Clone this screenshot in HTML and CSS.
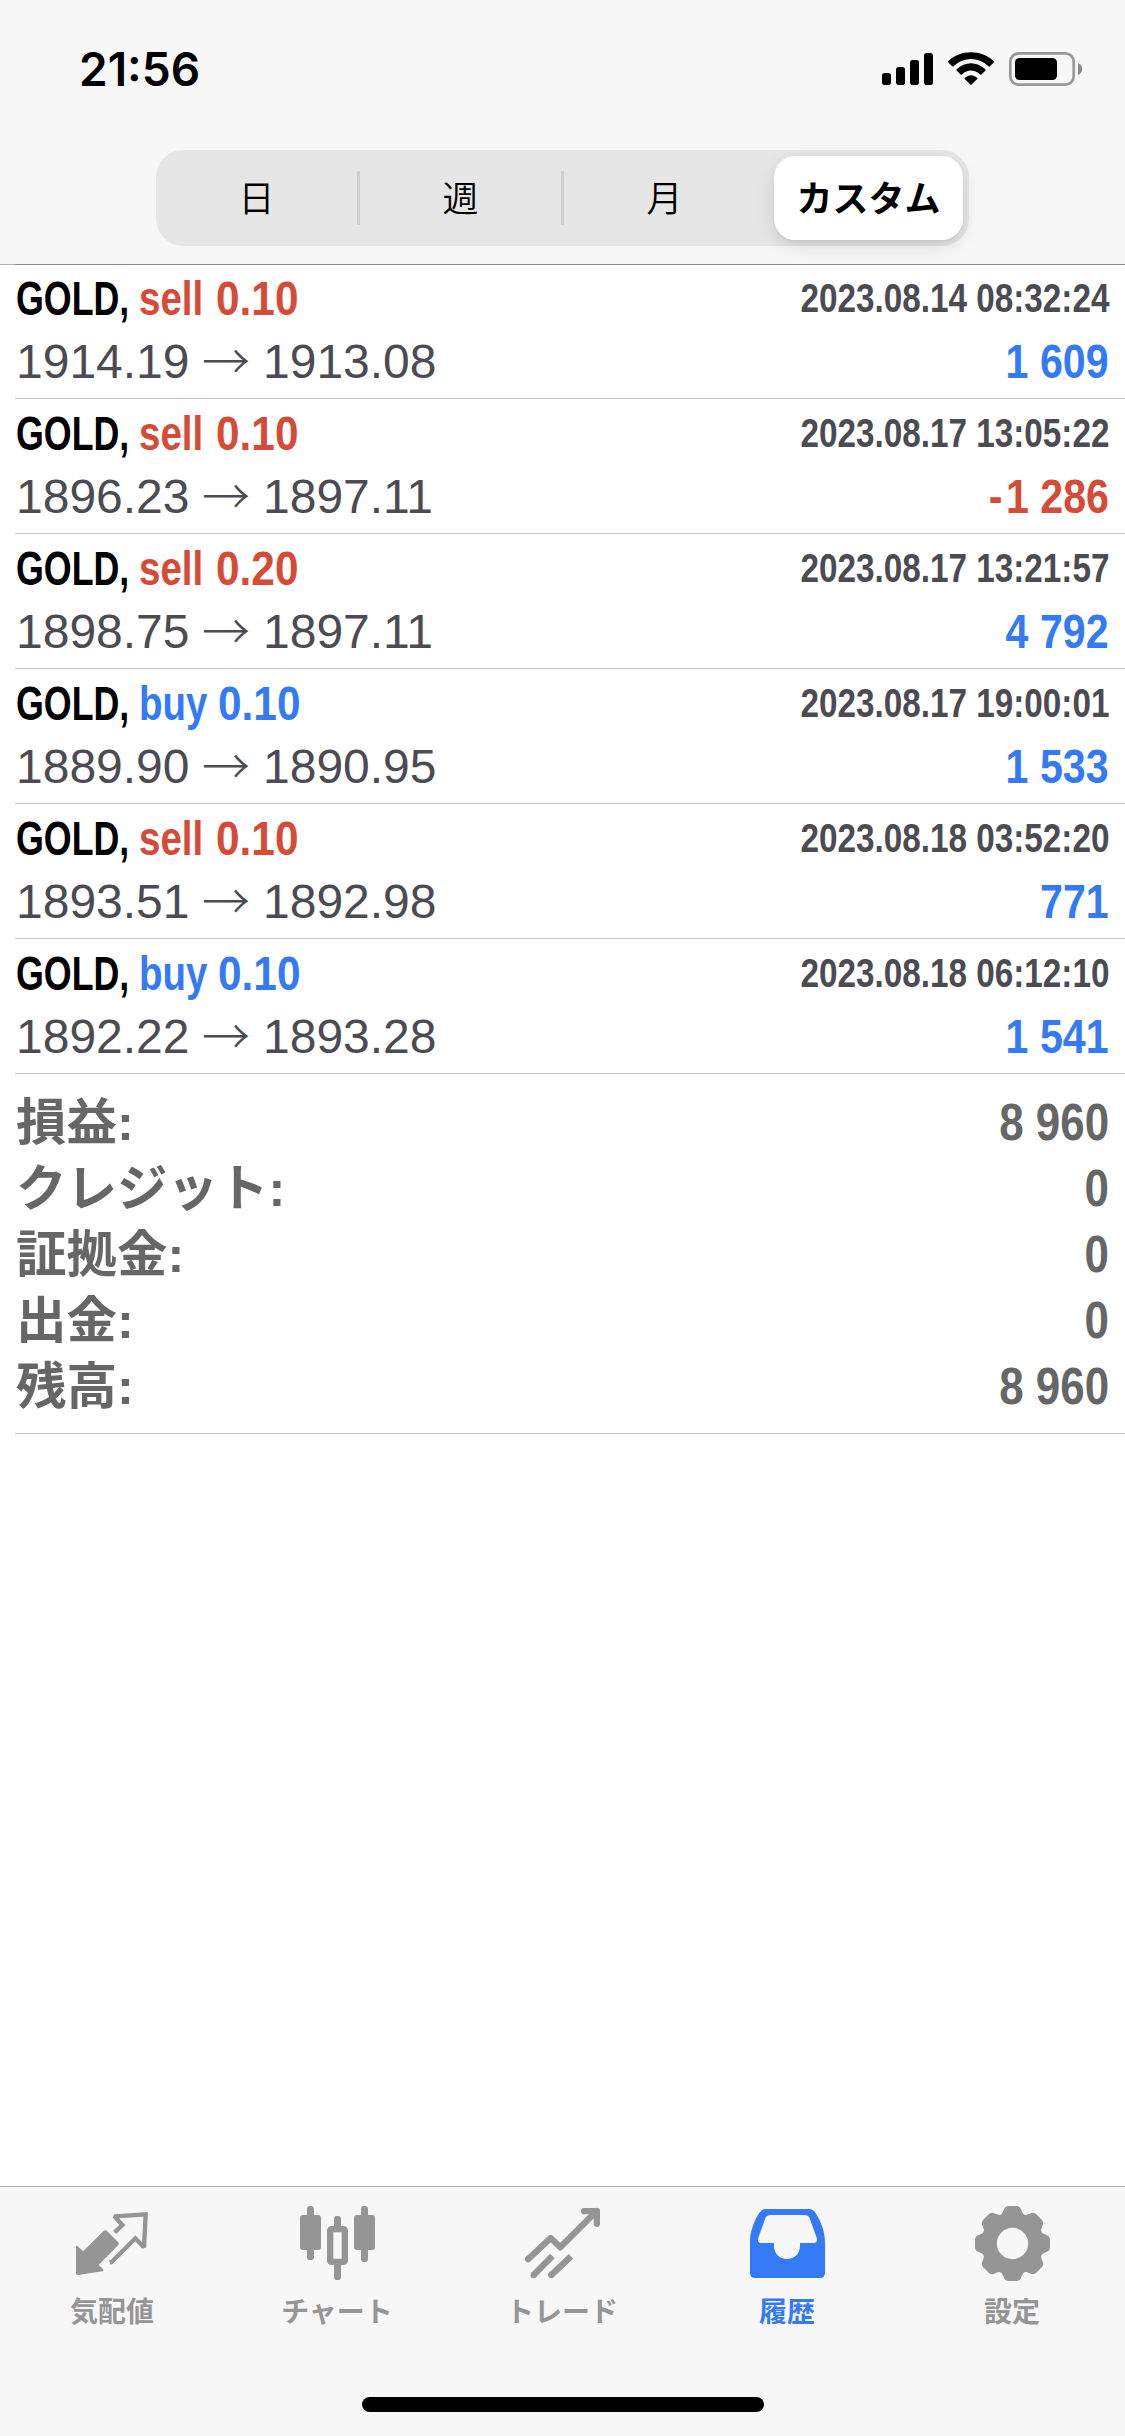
FILE: index.html
```html
<!DOCTYPE html>
<html lang="ja">
<head>
<meta charset="utf-8">
<title>履歴</title>
<link rel="stylesheet" href="styles.css">
</head>
<body>
<div class="app">
  <header class="header">
    <div class="status">
      <div class="time">21:56</div>
      <svg class="status-icons" width="202" height="36" viewBox="881 51 202 36">
        <rect x="882" y="73" width="9" height="12" rx="2.8"/>
        <rect x="896" y="67" width="9" height="18" rx="2.8"/>
        <rect x="910" y="60" width="9" height="25" rx="2.8"/>
        <rect x="924" y="53" width="9" height="32" rx="2.8"/>
        <path d="M948.2 62.2 Q947.8 61.7 948.4 61.1 C960 49.200 982 49.200 993.600 61.100 Q994.200 61.700 993.800 62.200 L989.900 66.200 Q989.200 66.800 988.500 66.200 C978 56.700 964 56.700 953.500 66.200 Q952.800 66.800 952.100 66.200 Z"/>
        <path d="M956.600 70.600 Q956 70 956.700 69.300 C965 61.200 977 61.200 985.300 69.300 Q986 70 985.400 70.600 L981.500 74.500 Q980.900 75 980.200 74.500 C974.500 69.300 967.500 69.300 961.800 74.500 Q961.100 75 960.500 74.500 Z"/>
        <path d="M964.800 78.900 Q964.200 78.300 964.900 77.700 C969 74.300 973 74.300 977.100 77.700 Q977.800 78.300 977.200 78.900 L971.700 84.400 Q971 85.100 970.300 84.400 Z"/>
        <rect x="1010.300" y="53.300" width="63.400" height="31.400" rx="8.500" fill="none" stroke="#989898" stroke-width="2.700"/>
        <rect x="1015" y="58" width="42" height="22" rx="4.500"/>
        <path d="M1078 63 Q1082.200 65 1082.200 69 Q1082.200 73 1078 75 Z" fill="#8a8a8a"/>
      </svg>
    </div>
    <div class="segments">
      <div class="seg">日</div>
      <div class="seg">週</div>
      <div class="seg">月</div>
      <div class="seg selected">カスタム</div>
    </div>
    <div class="edge"></div>
  </header>

  <main class="list">
    <section class="deal">
      <div class="line"><span class="symbol">GOLD,</span><span class="side sell">sell</span><span class="volume sell">0.10</span><span class="date">2023.08.14 08:32:24</span></div>
      <div class="line prices"><span class="from">1914.19</span><span class="arrow">→</span><span>1913.08</span><span class="profit buy">1 609</span></div>
    </section>
    <section class="deal">
      <div class="line"><span class="symbol">GOLD,</span><span class="side sell">sell</span><span class="volume sell">0.10</span><span class="date">2023.08.17 13:05:22</span></div>
      <div class="line prices"><span class="from">1896.23</span><span class="arrow">→</span><span>1897.11</span><span class="profit sell"><span class="minus">-</span>1 286</span></div>
    </section>
    <section class="deal">
      <div class="line"><span class="symbol">GOLD,</span><span class="side sell">sell</span><span class="volume sell">0.20</span><span class="date">2023.08.17 13:21:57</span></div>
      <div class="line prices"><span class="from">1898.75</span><span class="arrow">→</span><span>1897.11</span><span class="profit buy">4 792</span></div>
    </section>
    <section class="deal">
      <div class="line"><span class="symbol">GOLD,</span><span class="side buy">buy</span><span class="volume after-buy buy">0.10</span><span class="date">2023.08.17 19:00:01</span></div>
      <div class="line prices"><span class="from">1889.90</span><span class="arrow">→</span><span>1890.95</span><span class="profit buy">1 533</span></div>
    </section>
    <section class="deal">
      <div class="line"><span class="symbol">GOLD,</span><span class="side sell">sell</span><span class="volume sell">0.10</span><span class="date">2023.08.18 03:52:20</span></div>
      <div class="line prices"><span class="from">1893.51</span><span class="arrow">→</span><span>1892.98</span><span class="profit buy">771</span></div>
    </section>
    <section class="deal">
      <div class="line"><span class="symbol">GOLD,</span><span class="side buy">buy</span><span class="volume after-buy buy">0.10</span><span class="date">2023.08.18 06:12:10</span></div>
      <div class="line prices"><span class="from">1892.22</span><span class="arrow">→</span><span>1893.28</span><span class="profit buy">1 541</span></div>
    </section>
    <section class="summary">
      <div class="total"><span>損益:</span><span class="amount">8 960</span></div>
      <div class="total"><span>クレジット:</span><span class="amount">0</span></div>
      <div class="total"><span>証拠金:</span><span class="amount">0</span></div>
      <div class="total"><span>出金:</span><span class="amount">0</span></div>
      <div class="total"><span>残高:</span><span class="amount">8 960</span></div>
    </section>
  </main>

  <footer class="footer">
    <nav class="tabs">
      <div class="tab">
        <svg class="icon" viewBox="0 0 225 225">
          <path d="M3 123 Q3 117 8 121 L24 136 L86 75 Q91 70 96 75 L130 109 Q134 113 130 117 L71 177 L84 189 Q88 194 82 196 L10 207 Q3 208 3 200 Z" fill="currentColor"/>
          <path d="M119 79 L142 57 L118 31 L212 25 L207 124 L181 97 L110 168 L104 169" fill="none" stroke="currentColor" stroke-width="13" stroke-linejoin="miter" stroke-miterlimit="2"/>
        </svg>
        <span>気配値</span>
      </div>
      <div class="tab">
        <svg class="icon" viewBox="0 0 225 225" fill="currentColor">
          <rect x="21" y="0" width="21" height="162" rx="10"/><rect x="0" y="27" width="63" height="105" rx="9"/>
          <rect x="183" y="0" width="21" height="168" rx="10"/><rect x="162" y="27" width="63" height="105" rx="9"/>
          <rect x="102" y="30" width="21" height="40" rx="10"/><rect x="102" y="165" width="21" height="57" rx="10"/>
          <rect x="90.500" y="69.500" width="44" height="98" rx="4" fill="none" stroke="currentColor" stroke-width="19"/>
        </svg>
        <span>チャート</span>
      </div>
      <div class="tab">
        <svg class="icon" viewBox="0 0 225 225" fill="none" stroke="currentColor" stroke-width="19">
          <path d="M9.500 159.500 L77 96 L106 124 L215 15" stroke-linecap="round" stroke-linejoin="round"/>
          <path d="M177.500 15.500 H215.500 V53.500" stroke-linecap="round" stroke-linejoin="round"/>
          <path d="M26 207 L82 150 M79 207 L138 151"/>
          <path d="M26 207 h.1 M79 207 h.1" stroke-linecap="round"/>
        </svg>
        <span>トレード</span>
      </div>
      <div class="tab active">
        <svg class="icon" viewBox="0 0 225 225">
          <path fill="currentColor" fill-rule="evenodd" d="M47 9 H177 Q189 9 196 20 C214 48 225 78 225 108 V200 Q225 216 209 216 H16 Q0 216 0 200 V108 C0 78 11 46 28 20 Q36 9 47 9 Z M63 27 Q50 27 46 37 L25 95 Q20 111 36 111 H72 V121 C73 144 89 159 111 159 C133 159 149 144 150 121 V111 H189 Q205 111 200 95 L179 37 Q175 27 162 27 Z"/>
        </svg>
        <span>履歴</span>
      </div>
      <div class="tab">
        <svg class="icon" viewBox="0 0 225 225">
          <defs><path id="tooth" d="M72 30 Q82 25 86 13 Q89 0 102 0 H123 Q136 0 139 13 Q143 25 153 30 L140 55 H85 Z"/></defs>
          <g fill="currentColor">
            <use href="#tooth"/>
            <use href="#tooth" transform="rotate(45 112.500 112.500)"/>
            <use href="#tooth" transform="rotate(90 112.500 112.500)"/>
            <use href="#tooth" transform="rotate(135 112.500 112.500)"/>
            <use href="#tooth" transform="rotate(180 112.500 112.500)"/>
            <use href="#tooth" transform="rotate(225 112.500 112.500)"/>
            <use href="#tooth" transform="rotate(270 112.500 112.500)"/>
            <use href="#tooth" transform="rotate(315 112.500 112.500)"/>
          </g>
          <circle cx="112.500" cy="112.500" r="68.500" fill="none" stroke="currentColor" stroke-width="43"/>
        </svg>
        <span>設定</span>
      </div>
    </nav>
    <div class="home"></div>
  </footer>
</div>
</body>
</html>
```
FILE: styles.css
```css
* { box-sizing: border-box; }

body {
  margin: 0;
  background: #fff;
  font-family: "Liberation Sans", "Noto Sans CJK JP", sans-serif;
}

.app {
  width: 1125px;
  height: 2436px;
  display: flex;
  flex-direction: column;
  overflow: hidden;
}

.header {
  height: 265px;
  background: #f7f7f7;
  display: flex;
  flex-direction: column;
  align-items: center;
  flex: none;
}

.status {
  width: 100%;
  height: 150px;
  padding: 40px 42px 0 79px;
  display: flex;
  justify-content: space-between;
  align-items: flex-start;
}

.time {
  font: 600 46px/58px Inter, sans-serif;
}

.status-icons { margin-top: 11px; }

.segments {
  width: 813px;
  height: 96px;
  padding: 6px;
  border-radius: 27px;
  background: #e6e6e6;
  display: grid;
  grid-template-columns: 198px 204px 204px 1fr;
  align-items: center;
}

.seg {
  height: 54px;
  border-right: 3px solid #d0d0d0;
  font: 350 36px/51px "Noto Sans CJK JP", sans-serif;
  text-align: center;
}

.seg:first-child { padding-right: 6px; }

.seg:nth-child(3) { border-right-color: transparent; }

.seg.selected {
  height: 84px;
  margin-left: 6px;
  border: 0;
  border-radius: 21px;
  background: #fff;
  box-shadow: 0 6px 18px rgba(0, 0, 0, .12), 0 2px 3px rgba(0, 0, 0, .05);
  font-weight: 700;
  line-height: 81px;
}

.edge {
  width: 100%;
  height: 1px;
  margin-top: 18px;
  background: #878787;
  border-left: 15px solid #b3b3b3;
}

.list { flex: 1; padding-left: 15px; }

.deal {
  height: 135px;
  padding: 3px 16px 0 1px;
  background: linear-gradient(#c7c7c9, #c7c7c9) bottom / 100% 1px no-repeat;
}

.deal:first-child { height: 134px; padding-top: 2px; }

.line {
  height: 63px;
  display: flex;
  align-items: center;
  white-space: pre;
  font-weight: 700;
  font-size: 49px;
  line-height: 63px;
}

.symbol { width: 123px; transform: scaleX(.73); transform-origin: 0 0; }
.side { width: 77px; transform: scaleX(.785); transform-origin: 0 0; }
.volume { width: 90px; transform: scaleX(.865); transform-origin: 0 0; }
.after-buy { margin-left: 2px; }

.sell { color: #d64b37; }
.buy { color: #347af6; }

.date {
  margin-left: auto;
  color: #4c4b52;
  font-size: 40px;
  transform: scaleX(.832);
  transform-origin: 100% 0;
}

.prices {
  padding-right: 0;
  color: #4c4b52;
  font-weight: 400;
  font-size: 48px;
}

.from { width: 186px; }

.arrow {
  width: 61px;
  height: 63px;
  font: 300 48px/57px "Noto Sans CJK JP", sans-serif;
}

.profit {
  margin-left: auto;
  font-size: 49px;
  font-weight: 700;
  transform: scaleX(.84);
  transform-origin: 100% 0;
}

.minus { letter-spacing: 4px; }

.summary {
  height: 360px;
  padding: 15px 16px 0 1px;
  border-bottom: 1px solid #c7c7c9;
  color: #666;
  font-weight: 700;
}

.total {
  height: 66px;
  display: flex;
  align-items: baseline;
  justify-content: space-between;
  font-size: 50.500px;
  line-height: 66px;
}

.amount {
  font-size: 52px;
  transform: scaleX(.845);
  transform-origin: 100% 0;
}

.footer {
  height: 250px;
  flex: none;
  border-top: 1px solid #b0b0b0;
  background: #f7f7f7;
  display: flex;
  flex-direction: column;
  align-items: center;
}

.tabs {
  width: 100%;
  height: 210px;
  display: grid;
  grid-template-columns: repeat(5, 1fr);
}

.tab {
  padding-top: 19px;
  display: flex;
  flex-direction: column;
  align-items: center;
  color: #959595;
  font: 700 28px/40px "Noto Sans CJK JP", sans-serif;
}

.tab span { padding-right: 1px; }

.tab.active { color: #347af6; }

.icon { width: 75px; height: 75px; margin-bottom: 9px; }

.home {
  width: 402px;
  height: 15px;
  border-radius: 8px;
  background: #000;
}
```
